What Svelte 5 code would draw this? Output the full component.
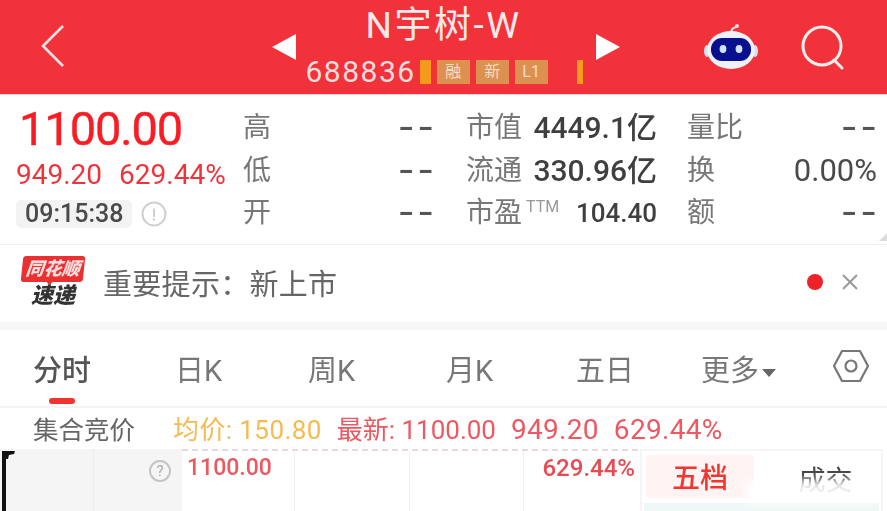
<script lang="ts">
	const stats = [
		{ label: '高', value: '--', name: '市值', amount: '4449.1亿', extra: '量比', extraValue: '--' },
		{ label: '低', value: '--', name: '流通', amount: '330.96亿', extra: '换', extraValue: '0.00%' },
		{ label: '开', value: '--', name: '市盈', ttm: true, amount: '104.40', extra: '额', extraValue: '--' }
	];
	const tabs = ['分时', '日K', '周K', '月K', '五日'];
	const badges = ['融', '新', 'L1'];
</script>

<div class="page">
	<header class="top">
		<svg class="back" width="28" height="46" viewBox="0 0 28 46" fill="none">
			<path d="M24 3 L4 23 L24 43" stroke="#fbe4e4" stroke-width="2.6" />
		</svg>
		<div class="center">
			<svg class="arrow" width="26" height="28" viewBox="0 0 26 28"><path d="M1 14 L25 1 V27 Z" fill="#fff" /></svg>
			<div class="titles">
				<div class="name">N宇树-W</div>
				<div class="code-row">
					<span class="code">688836</span>
					<span class="tick"></span>
					{#each badges as b}
						<span class="badge">{b}</span>
					{/each}
					<span class="tick end"></span>
				</div>
			</div>
			<svg class="arrow" width="26" height="28" viewBox="0 0 26 28"><path d="M25 14 L1 1 V27 Z" fill="#fff" /></svg>
		</div>
		<div class="actions">
			<svg class="robot" width="56" height="50" viewBox="0 0 56 50">
				<path d="M28 13 C28 8 30 7 33 6" stroke="#f4dcdc" stroke-width="2" fill="none" />
				<circle cx="34" cy="5" r="2" fill="#f4dcdc" />
				<ellipse cx="4" cy="30" rx="3" ry="6" fill="#d9dfeb" />
				<ellipse cx="52" cy="30" rx="3" ry="6" fill="#d9dfeb" />
				<ellipse cx="28" cy="29" rx="24" ry="19" fill="#eef1f6" />
				<rect x="8" y="17" width="40" height="23" rx="11" fill="#08108f" />
				<ellipse cx="20" cy="28" rx="3.4" ry="4" fill="#cfe3ff" />
				<ellipse cx="36" cy="28" rx="3.4" ry="4" fill="#cfe3ff" />
			</svg>
			<svg width="46" height="46" viewBox="0 0 46 46" fill="none" stroke="#fdeeee" stroke-width="3">
				<circle cx="21" cy="21" r="19" />
				<path d="M33 35 L41 43" stroke-linecap="round" />
			</svg>
		</div>
	</header>

	<section class="quote">
		<div class="price">
			<div class="last">1100.00</div>
			<div class="change"><span>949.20</span><span>629.44%</span></div>
			<div class="time-row">
				<span class="time">09:15:38</span>
				<svg width="26" height="26" viewBox="0 0 26 26" fill="none">
					<circle cx="13" cy="13" r="11.5" stroke="#cfcfcf" stroke-width="2" />
					<path d="M13 7.5 V16" stroke="#cfcfcf" stroke-width="2" />
					<circle cx="13" cy="18.5" r="1.2" fill="#cfcfcf" />
				</svg>
			</div>
		</div>
		<div class="stats">
			{#each stats as s}
				<span class="k">{s.label}</span>
				<span class="v dash">{s.value}</span>
				<span class="k name-k">{s.name}{#if s.ttm}<sup>TTM</sup>{/if}</span>
				<span class="v amount" class:small={s.ttm}>{s.amount}</span>
				<span class="k extra">{s.extra}</span>
				<span class="v" class:dash={s.extraValue === '--'}>{s.extraValue}</span>
			{/each}
		</div>
		<span class="corner"></span>
	</section>

	<section class="notice">
		<div class="logo">
			<span class="logo-top">同花顺</span>
			<span class="logo-bottom">速递</span>
		</div>
		<span class="notice-text">重要提示：新上市</span>
		<span class="dot"></span>
		<svg width="18" height="18" viewBox="0 0 18 18" stroke="#999" stroke-width="2"><path d="M2 2 L16 16 M16 2 L2 16" /></svg>
	</section>

	<nav class="tabs">
		{#each tabs as t, i}
			<span class="tab" class:active={i === 0}>{t}</span>
		{/each}
		<span class="tab more">更多<i></i></span>
		<svg class="hex" width="38" height="34" viewBox="0 0 38 34" fill="none" stroke="#777" stroke-width="2.2">
			<path d="M10 2 H28 L36 17 L28 32 H10 L2 17 Z" stroke-linejoin="round" />
			<circle cx="19" cy="17" r="5.5" />
		</svg>
	</nav>

	<div class="info">
		<span class="auction">集合竞价</span>
		<span class="avg">均价: 150.80</span>
		<span class="latest">最新: 1100.00</span>
		<span class="latest num">949.20</span>
		<span class="latest num">629.44%</span>
	</div>

	<div class="chart">
		<div class="pre">
			<svg class="flag" width="16" height="62" viewBox="0 0 16 62">
				<path d="M2 2 H15 L14 5 L9 6 L8 10 H6 V62 H2 Z" fill="#111" />
			</svg>
			<span class="help">?</span>
		</div>
		<div class="plot">
			<span></span><span></span><span></span><span></span>
			<b class="plot-price">1100.00</b>
			<b class="plot-pct">629.44%</b>
		</div>
		<div class="side">
			<div class="side-tabs">
				<span class="side-tab on">五档</span>
				<span class="side-tab">成交</span>
			</div>
			<div class="side-band"></div>
		</div>
		<div class="mark"></div>
	</div>
</div>

<style>
	:global(body) {
		margin: 0;
		background: #fff;
	}

	.page {
		width: 887px;
		height: 511px;
		overflow: hidden;
		font-family: Roboto, 'Noto Sans CJK SC', sans-serif;
		color: #444;
		filter: blur(0.5px);
	}

	.top {
		height: 95px;
		box-sizing: border-box;
		background: #f2323a;
		display: grid;
		grid-template-columns: 1fr auto 1fr;
		align-items: center;
		padding: 0 40px 0 39px;
		border-bottom: 1px solid #fbd5d5;
	}

	.back {
		margin-top: -2px;
	}

	.center {
		display: flex;
		align-items: center;
		margin-left: 5px;
	}

	.titles {
		width: 298px;
		height: 94px;
		display: flex;
		flex-direction: column;
		align-items: center;
	}

	.name {
		font-size: 37px;
		line-height: 40px;
		color: #fbe9e9;
		margin-top: 6px;
		letter-spacing: 2.5px;
		margin-left: -4px;
	}

	.code-row {
		align-self: flex-start;
		display: flex;
		align-items: center;
		gap: 6px;
		margin-top: 14px;
		padding-left: 9px;
		height: 24px;
	}

	.code {
		font-size: 30px;
		line-height: 24px;
		color: #fbdcdc;
		letter-spacing: 1.5px;
		margin-right: -2px;
	}

	.tick {
		width: 11px;
		height: 24px;
		background: #f69a1c;
	}

	.tick.end {
		width: 6px;
		margin-left: 23px;
	}

	.badge {
		width: 33px;
		height: 24px;
		background: #dd9150;
		color: #f8dcc4;
		font-size: 16px;
		line-height: 24px;
		text-align: center;
	}

	.actions {
		display: flex;
		justify-content: flex-end;
		align-items: center;
		gap: 42px;
		margin-top: 1px;
	}

	.robot {
		margin-top: -4px;
	}

	.quote {
		position: relative;
		height: 150px;
		display: flex;
		border-bottom: 1px solid #f0f0f0;
		box-sizing: border-box;
	}

	.price {
		width: 243px;
		flex: none;
		padding: 7px 0 0 16px;
		box-sizing: border-box;
	}

	.last {
		font-size: 47px;
		line-height: 54px;
		color: #f81c24;
		padding-left: 3px;
		-webkit-text-stroke: 0.4px #f81c24;
		letter-spacing: -1.1px;
	}

	.change {
		display: flex;
		gap: 17px;
		font-size: 28px;
		line-height: 34px;
		color: #f0333a;
		margin-top: 2px;
		white-space: nowrap;
	}

	.time-row {
		display: flex;
		align-items: center;
		gap: 9px;
		margin-top: 8px;
	}

	.time {
		background: #f3f3f3;
		border-radius: 5px;
		font-size: 25px;
		font-weight: 500;
		line-height: 28px;
		padding: 0 9px;
		color: #4a4a4a;
	}

	.stats {
		display: grid;
		grid-template-columns: 30px 161px 102px 121px 88px 132px;
		grid-auto-rows: 42.5px;
		align-items: center;
		padding-top: 12px;
	}

	.k {
		font-size: 28px;
		color: #777;
		line-height: 1;
		white-space: nowrap;
	}

	.name-k {
		padding-left: 32px;
	}

	.name-k sup {
		font-size: 16px;
		color: #999;
		vertical-align: 10px;
		line-height: 0;
		margin-left: 4px;
	}

	.extra {
		padding-left: 30px;
	}

	.v {
		justify-self: end;
		font-size: 31px;
		color: #4a4a4a;
		line-height: 1;
		white-space: nowrap;
	}

	.amount {
		font-weight: 500;
		color: #3f3f3f;
		font-size: 30px;
	}

	.amount.small {
		font-size: 26px;
	}

	.dash {
		font-size: 28px;
		font-weight: 700;
		letter-spacing: 2px;
		color: #555;
		margin-right: -3px;
		transform: scaleX(1.5);
		transform-origin: right center;
	}

	.corner {
		position: absolute;
		right: 0;
		bottom: 3px;
		border-left: 8px solid transparent;
		border-bottom: 8px solid #ddd;
	}

	.notice {
		height: 77px;
		display: flex;
		align-items: center;
		padding: 0 28px 4px 21px;
		box-sizing: border-box;
	}

	.logo {
		width: 64px;
		display: flex;
		flex-direction: column;
		align-items: center;
		font-style: italic;
		font-weight: 900;
		line-height: 1;
		margin-right: 18px;
	}

	.logo-top {
		position: relative;
		background: #ea3030;
		color: #fbdcdc;
		font-size: 18px;
		padding: 4px 4px;
		border-radius: 3px;
		transform: skewX(-6deg);
	}

	.logo-top::after {
		content: '';
		position: absolute;
		left: 26px;
		bottom: -3px;
		border: 3px solid transparent;
		border-top: 3px solid #ea3030;
		border-bottom: 0;
	}

	.logo-bottom {
		font-size: 22px;
		margin-top: 3px;
		color: #333;
	}

	.notice-text {
		font-size: 29px;
		letter-spacing: 0.3px;
		color: #666;
		flex: 1;
	}

	.dot {
		width: 16px;
		height: 16px;
		border-radius: 50%;
		background: #ee2228;
		margin-right: 18px;
	}

	.tabs {
		border-top: 8px solid #f6f6f6;
		height: 86px;
		box-sizing: border-box;
		display: flex;
		align-items: center;
		padding: 0 17px 0 33px;
		border-bottom: 2px solid #f4f4f4;
	}

	.hex {
		margin-top: -4px;
	}

	.tab {
		position: relative;
		font-size: 29px;
		color: #777;
		width: 136px;
	}

	.tab:nth-child(2) { width: 133px; margin-left: 6px; }
	.tab:nth-child(3) { width: 138px; }
	.tab:nth-child(4) { width: 130px; }
	.tab:nth-child(5) { width: 125px; }

	.tab.active {
		color: #555;
		font-weight: 500;
	}

	.tab.active::after {
		content: '';
		position: absolute;
		left: 16px;
		top: 51px;
		width: 26px;
		height: 6px;
		border-radius: 3px;
		background: #f0352f;
	}

	.more {
		width: auto;
		flex: 1;
	}

	.more i {
		display: inline-block;
		margin-left: 3px;
		vertical-align: 4px;
		border: 7px solid transparent;
		border-top: 8px solid #666;
		border-bottom: 0;
	}

	.info {
		height: 41px;
		display: flex;
		align-items: baseline;
		line-height: 44px;
		padding-left: 33px;
		gap: 15px;
		font-size: 26px;
		box-sizing: border-box;
	}

	.auction {
		color: #666;
		font-size: 25.5px;
		margin-right: 23px;
	}

	.avg {
		color: #f4bb50;
		letter-spacing: 0.4px;
	}

	.latest {
		color: #ee5860;
	}

	.num {
		font-size: 28px;
		letter-spacing: 0.3px;
	}

	.chart {
		position: relative;
		height: 62px;
		display: flex;
	}

	.pre {
		position: relative;
		width: 182px;
		background: #f5f5f5;
		background-image: linear-gradient(#ececec, #ececec);
		background-size: 1px 100%;
		background-position: 93px 0;
		background-repeat: no-repeat;
		flex: none;
	}

	.flag {
		position: absolute;
		left: 0;
		top: 0;
	}

	.help {
		position: absolute;
		left: 149px;
		top: 11px;
		width: 18px;
		height: 18px;
		border: 2px solid #c4c4c4;
		border-radius: 50%;
		color: #aaa;
		font-size: 15px;
		line-height: 18px;
		text-align: center;
	}

	.plot {
		position: relative;
		width: 456px;
		flex: none;
		display: grid;
		grid-template-columns: 113px 115px 114px 114px;
		border-top: 2px dashed #e8d8d8;
		box-sizing: border-box;
	}

	.plot span {
		border-right: 1px solid #f0f0f0;
	}

	.plot span:last-of-type {
		border-right: 0;
	}

	.plot-price,
	.plot-pct {
		position: absolute;
		top: 2px;
		font-weight: 500;
		line-height: 30px;
	}

	.plot-price {
		left: 5px;
		font-size: 23px;
		color: #e95a63;
	}

	.plot-pct {
		right: 3px;
		font-size: 24px;
		color: #ea4b52;
	}

	.side {
		margin-left: 2px;
		width: 243px;
		flex: none;
		border: 2px solid #f5f5f5;
		border-bottom: 0;
		box-sizing: border-box;
		padding: 4px 4px 0;
	}

	.side-tabs {
		display: flex;
		height: 43px;
	}

	.side-tab {
		width: 110px;
		font-size: 28px;
		line-height: 47px;
		text-align: center;
		color: #444;
		border-radius: 4px;
	}

	.side-tab.on {
		background: #fff3f3;
		color: #f0362f;
		font-weight: 500;
	}

	.side-tab:last-child {
		width: 125px;
		padding-left: 20px;
		box-sizing: border-box;
		font-size: 27px;
		line-height: 52px;
	}

	.side-band {
		height: 8px;
		margin: 5px -2px 0;
		background: #eff8f6;
	}

	.mark {
		position: absolute;
		left: 745px;
		top: 31px;
		width: 130px;
		height: 24px;
		background: rgba(255, 255, 255, 0.9);
		filter: blur(4px);
	}
</style>
